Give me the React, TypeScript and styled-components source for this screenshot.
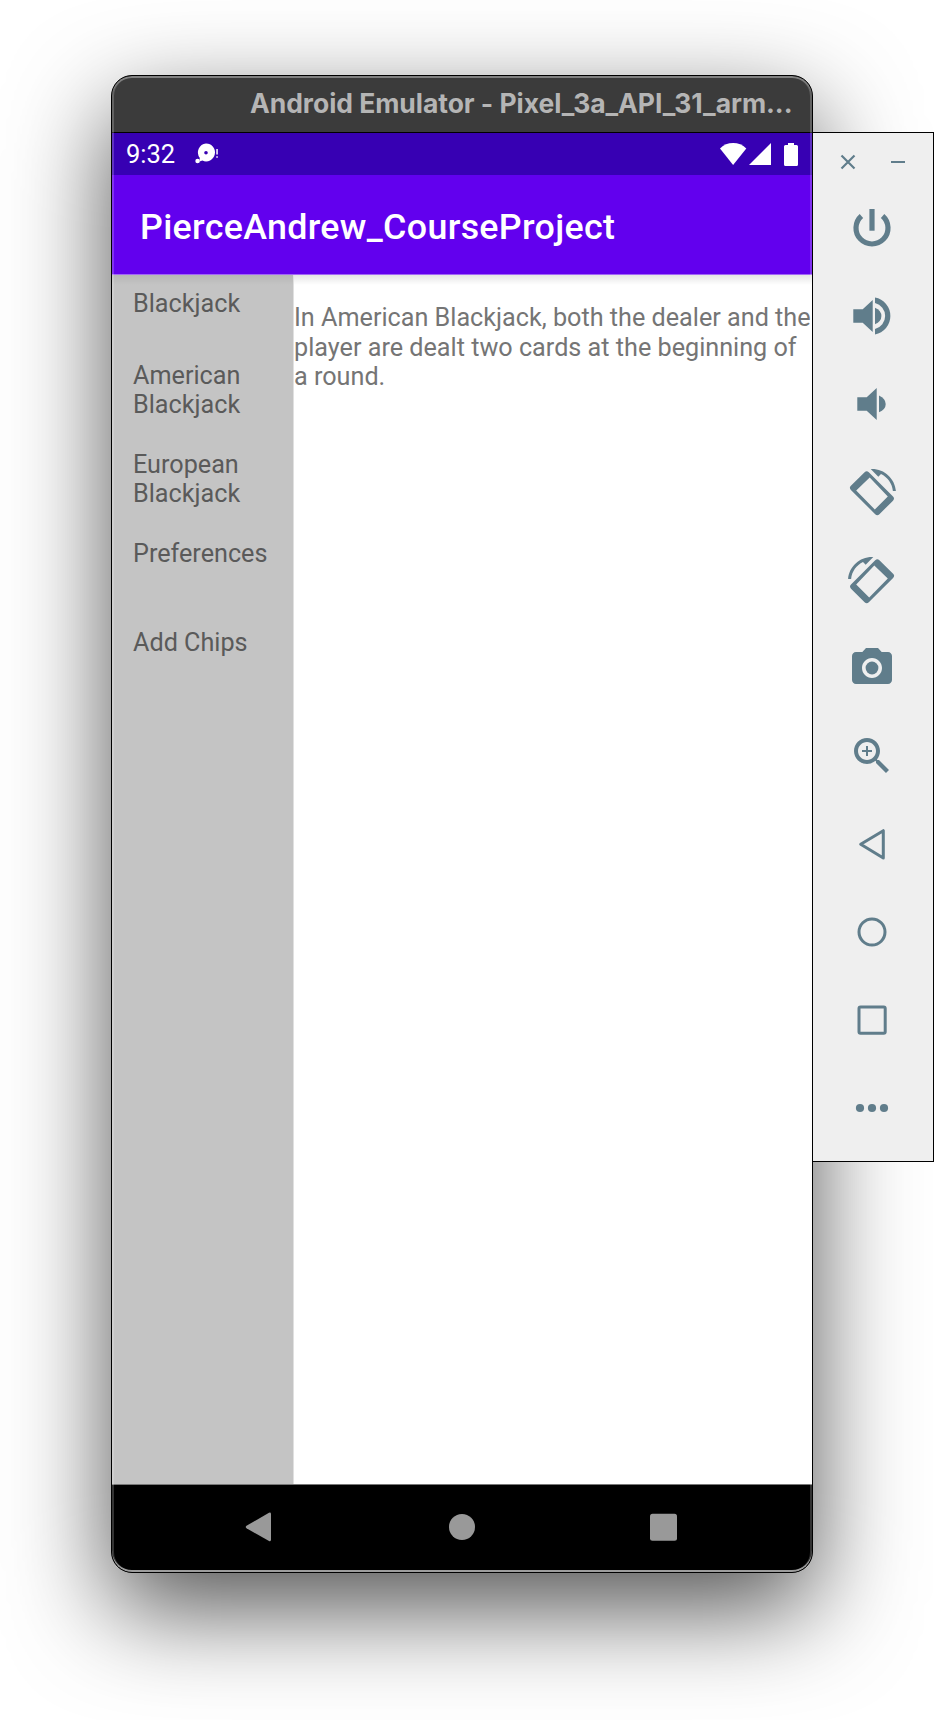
import React from "react";
import styled, { createGlobalStyle } from "styled-components";

const GlobalStyle = createGlobalStyle`
  * { box-sizing: border-box; }
  body { margin: 0; background: #fff; overflow: hidden; }
`;

const Desktop = styled.main`
  display: flex;
  align-items: flex-start;
  width: 934px;
  height: 1720px;
  padding: 75px 0 0 111px;
  overflow: hidden;
  background: #fff;
`;

const EmulatorWindow = styled.section`
  position: relative;
  display: flex;
  flex-direction: column;
  flex: none;
  width: 702px;
  height: 1498px;
  border: 1px solid #000;
  border-radius: 21px;
  overflow: hidden;
  background: #000;
  font-family: Roboto, sans-serif;
`;

const WindowShadow = styled.div`
  flex: none;
  border-radius: 21px;
  box-shadow: 0 36px 100px rgba(0, 0, 0, 0.68);
`;

const WindowEdge = styled.div`
  position: absolute;
  inset: 0;
  border-radius: 20px;
  pointer-events: none;
  box-shadow:
    inset 0 2px 0 rgba(255, 255, 255, 0.2),
    inset 0 -2px 0 rgba(255, 255, 255, 0.52),
    inset 0 0 0 2px rgba(255, 255, 255, 0.2);
`;

const TitleBar = styled.header`
  display: flex;
  align-items: center;
  height: 57px;
  padding: 0 0 3px 138px;
  border-bottom: 1px solid #000;
  background: #3b3b3b;
  color: #b5b5b5;
  font: 700 26.5px/30px Inter, sans-serif;
  letter-spacing: -0.05px;
  white-space: nowrap;
`;

const StatusBar = styled.div`
  display: flex;
  align-items: center;
  height: 42px;
  padding: 0 14px 0 14px;
  background: #3700b3;
  color: #fff;
`;

const Clock = styled.span`
  width: 69px;
  font-size: 25.5px;
  line-height: 30px;
`;

const StatusIcons = styled.div`
  display: flex;
  margin-left: auto;
`;

const AppBar = styled.div`
  display: flex;
  align-items: center;
  height: 100px;
  padding: 5px 28px 0;
  border-bottom: 1px solid #a366f6;
  background: #6200ee;
  color: #fff;
  font-size: 35.8px;
  font-weight: 500;
  letter-spacing: 0.32px;
  white-space: nowrap;
`;

const AppBody = styled.div`
  display: flex;
  height: 1209px;
  background: linear-gradient(rgba(0, 0, 0, 0.1), rgba(0, 0, 0, 0) 10px) #fff;
  font-size: 25.2px;
  line-height: 29.67px;
`;

const Sidebar = styled.nav`
  flex: none;
  width: 182px;
  padding: 14px 0 0 21px;
  border-right: 1px solid #e0e0e0;
  background: linear-gradient(rgba(0, 0, 0, 0.07), rgba(0, 0, 0, 0) 10px) #c4c4c4;
  color: #5a5a5a;
`;

const SidebarItem = styled.div<{ $height: number }>`
  height: ${(p) => p.$height}px;
`;

const Description = styled.p`
  margin: 0;
  padding-top: 28px;
  color: #757575;
  white-space: nowrap;
`;

const NavigationBar = styled.div`
  display: flex;
  gap: 172px;
  height: 88px;
  padding: 26px 0 0 130px;
  border-top: 1px solid #777;
  background: #000;
  fill: #999;
`;

const ControlPanel = styled.aside`
  position: relative;
  flex: none;
  width: 121px;
  height: 1030px;
  margin-top: 57px;
  border: 1px solid #000;
  border-left: 0;
  background: #efefef;
  color: #607d8b;
`;

const PanelHeader = styled.div`
  display: flex;
  justify-content: space-between;
  height: 51px;
  padding: 21px 27px 0;
`;

const PanelButton = styled.button`
  display: flex;
  align-items: center;
  justify-content: center;
  width: 118px;
  height: 88px;
  padding: 0;
  border: 0;
  background: none;
  color: inherit;
`;

const WindowButton = styled.button`
  display: flex;
  width: 16px;
  height: 16px;
  padding: 0;
  border: 0;
  background: none;
  color: inherit;
`;

const sidebarItems: { lines: string[]; height: number }[] = [
  { lines: ["Blackjack"], height: 71.5 },
  { lines: ["American", "Blackjack"], height: 89 },
  { lines: ["European", "Blackjack"], height: 89 },
  { lines: ["Preferences"], height: 89 },
  { lines: ["Add Chips"], height: 89 },
];

const RotateShape = () => (
  <>
    <path
      fillRule="evenodd"
      d="M16.6 4.2Q18.7 2.1 20.8 4.2L45 28.4Q47 30.5 45 32.7L31.4 46.2Q29.3 48.2 27.2 46.2L2.9 21.9Q.8 19.8 2.9 17.7ZM21.7 9.6L8.2 22.6L26.8 41.5L39.8 28.6Z"
    />
    <path d="M33 6C39.5 9.1 44.2 15.5 44.9 23H47.9C46.9 10.7 36.6 1 24 1L22.7 1.1L30.3 8.7Z" />
  </>
);

const panelIcons: { label: string; icon: React.ReactNode }[] = [
  {
    label: "Power",
    icon: (
      <>
        <path d="M13.4 12A16 16 0 1 0 34.6 12" fill="none" stroke="currentColor" strokeWidth="5.2" />
        <rect x="21.4" y="5" width="5.2" height="21.7" />
      </>
    ),
  },
  {
    label: "Volume up",
    icon: (
      <>
        <path d="M5.3 17.3H14.7L24.7 8V40L14.7 30.7H5.3Z" />
        <path d="M27 15.7Q33.4 18.6 33.4 24T27 32.3Z" />
        <path d="M27 5.6A18.7 18.7 0 0 1 27 42.4V37A13.4 13.4 0 0 0 27 11Z" />
      </>
    ),
  },
  {
    label: "Volume down",
    icon: (
      <>
        <path d="M9.3 17.3H18.7L28.7 8V40L18.7 30.7H9.3Z" />
        <path d="M31 15.5Q37.7 18.6 37.7 24T31 32.3Z" />
      </>
    ),
  },
  { label: "Rotate left", icon: <RotateShape /> },
  {
    label: "Rotate right",
    icon: (
      <g transform="translate(48 0) scale(-1 1)">
        <RotateShape />
      </g>
    ),
  },
  {
    label: "Take screenshot",
    icon: (
      <g transform="scale(2)">
        <path
          fillRule="evenodd"
          d="M9 2L7.17 4H4c-1.1 0-2 .9-2 2v12c0 1.1.9 2 2 2h16c1.1 0 2-.9 2-2V6c0-1.1-.9-2-2-2h-3.17L15 2H9zm3 15c-2.76 0-5-2.24-5-5s2.24-5 5-5 5 2.24 5 5-2.24 5-5 5z"
        />
        <circle cx="12" cy="12" r="3.2" />
      </g>
    ),
  },
  {
    label: "Zoom",
    icon: (
      <path
        transform="scale(2)"
        d="M15.5 14h-.79l-.28-.27C15.41 12.59 16 11.11 16 9.5 16 5.91 13.09 3 9.5 3S3 5.91 3 9.5 5.91 16 9.5 16c1.61 0 3.09-.59 4.23-1.57l.27.28v.79l5 4.99L20.49 19l-4.99-5zm-6 0C7.01 14 5 11.99 5 9.5S7.01 5 9.5 5 14 7.01 14 9.5 11.99 14 9.5 14zM12 10h-2v2H9v-2H7V9h2V7h1v2h2v1z"
      />
    ),
  },
  {
    label: "Back",
    icon: (
      <path d="M12.7 24.2L35.3 10.7V38Z" fill="none" stroke="currentColor" strokeWidth="3" strokeLinejoin="round" />
    ),
  },
  {
    label: "Home",
    icon: <circle cx="24" cy="24" r="13" fill="none" stroke="currentColor" strokeWidth="3" />,
  },
  {
    label: "Overview",
    icon: (
      <rect x="11" y="11" width="26.2" height="26.2" rx="1.5" fill="none" stroke="currentColor" strokeWidth="3" />
    ),
  },
  {
    label: "More",
    icon: (
      <>
        <circle cx="12" cy="24" r="4.1" />
        <circle cx="24" cy="24" r="4.1" />
        <circle cx="36" cy="24" r="4.1" />
      </>
    ),
  },
];

export default function App() {
  return (
    <>
      <GlobalStyle />
      <Desktop>
        <WindowShadow>
          <EmulatorWindow>
            <TitleBar>Android Emulator - Pixel_3a_API_31_arm...</TitleBar>
            <StatusBar>
              <Clock>9:32</Clock>
              <svg width="26" height="24" viewBox="0 0 26 24" fill="#fff">
                <path
                  fillRule="evenodd"
                  d="M11 2.6a8.9 8.9 0 1 1-3.6 17L4.6 20.4L4.7 16.8A8.9 8.9 0 0 1 11 2.6ZM11 9.9a1.8 1.8 0 1 0 0 3.6a1.8 1.8 0 1 0 0-3.6Z"
                  transform="translate(0 -1)"
                />
                <circle cx="2.6" cy="19" r="2.3" />
                <path d="M21.3 7h1.5v5.6h-1.5zM21.3 14.2h1.5v1.6h-1.5z" />
              </svg>
              <StatusIcons>
                <svg width="78" height="24" viewBox="0 0 78 24" fill="#fff">
                  <path d="M0 6.4Q5.5 1 13.1 1T26.3 6.4L13.1 23Z" />
                  <path d="M51 1V23H29Z" />
                  <path d="M68 1h6v2h2.5q1.5 0 1.5 1.5V22.500q0 1.500-1.500 1.500h-11q-1.500 0-1.500-1.500V4.500q0-1.500 1.500-1.500H68Z" />
                </svg>
              </StatusIcons>
            </StatusBar>
            <AppBar>PierceAndrew_CourseProject</AppBar>
            <AppBody>
              <Sidebar>
                {sidebarItems.map((item) => (
                  <SidebarItem key={item.lines.join(" ")} $height={item.height}>
                    {item.lines.map((line) => (
                      <div key={line}>{line}</div>
                    ))}
                  </SidebarItem>
                ))}
              </Sidebar>
              <Description>
                In American Blackjack, both the dealer and the
                <br />
                player are dealt two cards at the beginning of
                <br />a round.
              </Description>
            </AppBody>
            <NavigationBar>
              <svg width="32" height="32" viewBox="0 0 32 32">
                <path d="M4.500 14.800L27 1.700Q29 1 29 3V28.500Q29 31 27 30L4.500 17.300Q3 16 4.500 14.800Z" />
              </svg>
              <svg width="32" height="32" viewBox="0 0 32 32">
                <circle cx="16" cy="16" r="13" />
              </svg>
              <svg width="32" height="32" viewBox="0 0 32 32">
                <rect x="0" y="2.700" width="27" height="27" rx="2.500" />
              </svg>
            </NavigationBar>
            <WindowEdge />
          </EmulatorWindow>
        </WindowShadow>
        <ControlPanel>
          <PanelHeader>
            <WindowButton aria-label="Close">
              <svg width="16" height="16" viewBox="0 0 16 16">
                <path d="M1.500 1.500L14.500 14.500M14.500 1.500L1.500 14.500" stroke="currentColor" strokeWidth="2.200" />
              </svg>
            </WindowButton>
            <WindowButton aria-label="Minimize">
              <svg width="16" height="16" viewBox="0 0 16 16">
                <path d="M1 8H15" stroke="currentColor" strokeWidth="2" />
              </svg>
            </WindowButton>
          </PanelHeader>
          {panelIcons.map(({ label, icon }) => (
            <PanelButton key={label} aria-label={label}>
              <svg width="48" height="48" viewBox="0 0 48 48" fill="currentColor">
                {icon}
              </svg>
            </PanelButton>
          ))}
        </ControlPanel>
      </Desktop>
    </>
  );
}
